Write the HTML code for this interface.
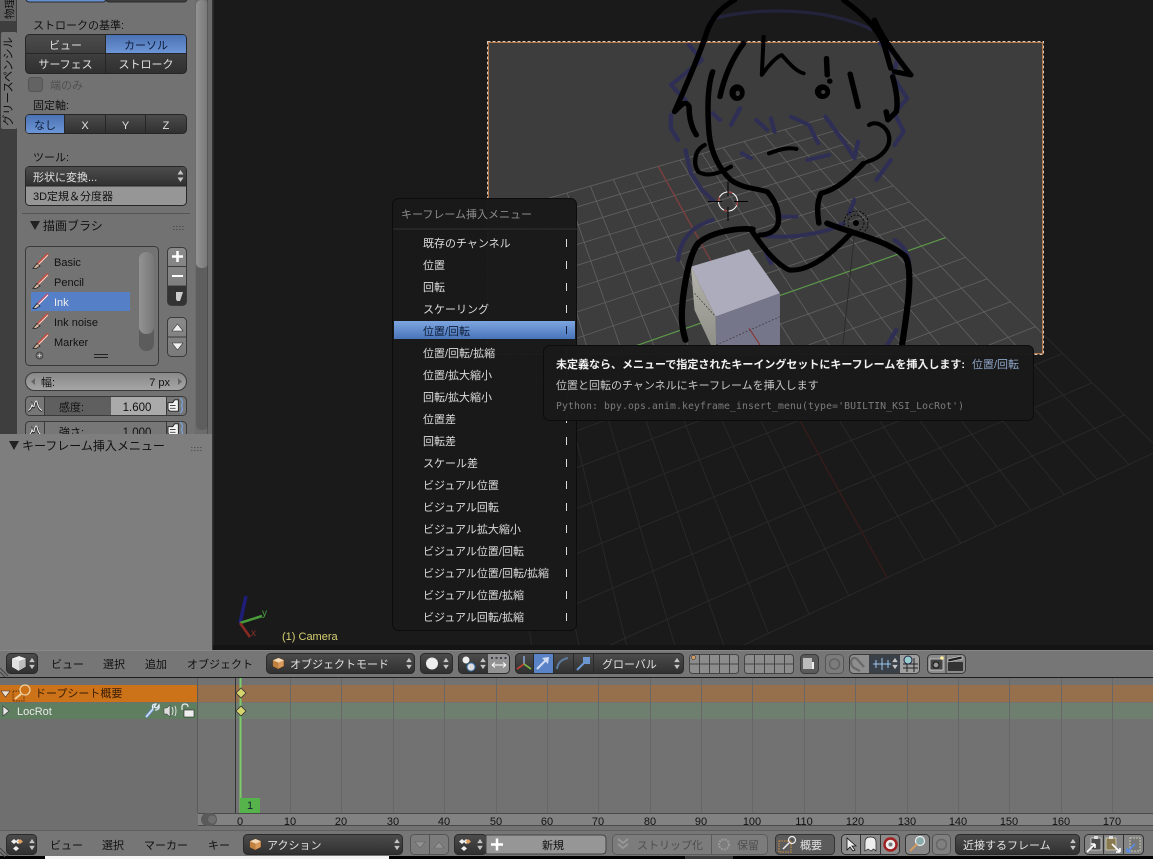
<!DOCTYPE html>
<html><head><meta charset="utf-8"><title>Blender</title>
<style>
html,body{margin:0;padding:0;background:#000;width:1153px;height:859px;overflow:hidden}
svg{display:block;filter:blur(.35px)}
text{font-family:"Liberation Sans","Noto Sans CJK JP",sans-serif;font-size:11px;fill:#111}
.l{fill:#e2e2e2}.m{fill:#dcdcdc}.c{text-anchor:middle}
.b{fill:none;stroke:#000;stroke-width:15;stroke-linecap:round;stroke-linejoin:round}
.u{fill:none;stroke:#2f2f56;stroke-width:12;stroke-linecap:round;stroke-linejoin:round}
</style></head><body>
<svg xmlns="http://www.w3.org/2000/svg" width="1153" height="859" viewBox="0 0 1153 859">
<defs>
<linearGradient id="dk2" x1="0" y1="0" x2="0" y2="1"><stop offset="0" stop-color="#4c4c4c"/><stop offset="1" stop-color="#303030"/></linearGradient>
<linearGradient id="bl" x1="0" y1="0" x2="0" y2="1"><stop offset="0" stop-color="#4b72b2"/><stop offset="1" stop-color="#6d96d8"/></linearGradient>
<linearGradient id="mh" x1="0" y1="0" x2="0" y2="1"><stop offset="0" stop-color="#7da5e0"/><stop offset="1" stop-color="#4874b8"/></linearGradient>
<linearGradient id="gy" x1="0" y1="0" x2="0" y2="1"><stop offset="0" stop-color="#8a8a8a"/><stop offset="1" stop-color="#7a7a7a"/></linearGradient>
<linearGradient id="sl" x1="0" y1="0" x2="0" y2="1"><stop offset="0" stop-color="#888"/><stop offset="1" stop-color="#a6a6a6"/></linearGradient>
<linearGradient id="sc" x1="0" y1="0" x2="1" y2="0"><stop offset="0" stop-color="#939393"/><stop offset="1" stop-color="#777"/></linearGradient>
<linearGradient id="lf" x1="0" y1="0" x2="0" y2="1"><stop offset="0" stop-color="#b4b4ac"/><stop offset="1" stop-color="#8a8a84"/></linearGradient>
<symbol id="brush" viewBox="0 0 16 16" overflow="visible"><path d="M0 15.500 L4 10.500 L7 13 L3 15.500 Z" fill="#d8b8a0" stroke="#222" stroke-width=".8"/><path d="M5 11 L15 1" stroke="#c05040" stroke-width="3"/><path d="M5.500 11.500 L15 2" stroke="#f0e0d8" stroke-width=".9"/></symbol>
<symbol id="brushb" viewBox="0 0 16 16" overflow="visible"><path d="M0 15.500 L4 10.500 L7 13 L3 15.500 Z" fill="#d8c8d0" stroke="#122" stroke-width=".8"/><path d="M5 11 L15 1" stroke="#b05878" stroke-width="3"/><path d="M5.500 11.500 L15 2" stroke="#fff" stroke-width=".9"/></symbol>
<symbol id="cube" viewBox="0 0 14 14"><path d="M7 1 L13 3.500 L13 10 L7 13 L1 10 L1 3.500Z" fill="#d99a5c" stroke="#4a3320" stroke-width=".7"/><path d="M7 1 L13 3.500 L7 6 L1 3.500Z" fill="#f4d8b4"/><path d="M1 3.500 L7 6 L7 13 L1 10Z" fill="#c08040"/></symbol>
<symbol id="keys" viewBox="0 0 16 14"><path d="M4 1 L7 3.500 L4 6 L1 3.500Z M8 1 L11 3.500 L8 6 L5.500 3.500Z M6 8 L9 10.500 L6 13 L3 10.500Z" fill="#eee"/><path d="M10 1 L13 3.500 L10 6 L7.500 3.500Z" fill="#e0a060"/></symbol>
<symbol id="ud" viewBox="0 0 8 14"><path d="M4 1 L7 5.500 L1 5.500Z M4 13 L7 8.500 L1 8.500Z" fill="#c4c4c4"/></symbol>
<symbol id="hand" viewBox="0 0 20 18"><path d="M1 6 H6 L8 3 H12 V15 H5 Q1 15 1 12Z" fill="#f2f2f2" stroke="#222" stroke-width="1"/><path d="M3 9 H9 M3 12 H9" stroke="#444" stroke-width="1"/><path d="M14 1 Q18 5 15 9 Q18 13 14 17" fill="none" stroke="#7ba4e0" stroke-width="1.300"/></symbol>
<symbol id="peak" viewBox="0 0 16 14"><path d="M1 13 Q4 12 5 7 Q6 10 7 9 Q8 2 10 4 Q11 11 15 13" fill="none" stroke="#222" stroke-width="2.200"/><path d="M1 12.500 Q4 11.500 5 6.500 Q6 9.500 7 8.500 Q8 1.500 10 3.500 Q11 10.500 15 12.500" fill="none" stroke="#eee" stroke-width="1.100"/></symbol>
</defs>

<rect width="1153" height="859" fill="#000"/>

<!-- VIEWPORT -->
<rect x="213" y="0" width="940" height="650" fill="#3d3d3d"/>
<g id="grid" stroke="#626262" stroke-width=".8" fill="none"></g>
<!-- cube -->
<g transform="translate(480 0) scale(.3636 .3333)">
<path d="M580 800 L740 748 L825 880 L648 950Z" fill="#acacbc"/>
<path d="M648 950 L825 880 L825 1070 L650 1070Z" fill="#76768a"/>
<path d="M580 800 L648 950 L650 1070 L590 930Z" fill="url(#lf)"/>
<path d="M590 880 L648 950 M650 1035 L825 950" stroke="#333" stroke-width="2" stroke-dasharray="5 5" fill="none"/>
<path d="M740 985 L770 1035" stroke="#8a3030" stroke-width="3"/>
<path d="M1030 700 L998 1035" stroke="#2b2b2b" stroke-width="2.500" fill="none"/>
</g>
<!-- passepartout -->
<path d="M213 0 H1153 V650 H213Z M488 42 V354 H1043 V42Z" fill="#000" fill-opacity=".56" fill-rule="evenodd"/>
<rect x="488.500" y="42.500" width="554" height="311" fill="none" stroke="#b87848" stroke-width="1"/>
<rect x="487.500" y="41.500" width="556" height="313" fill="none" stroke="#dcc8b8" stroke-width="1" stroke-dasharray="3 2"/>
<!-- drawing -->
<g transform="translate(480 0) scale(.3636 .3333)">
<path d="M630 60 C750 20 950 20 1080 90" fill="none" stroke="#23233c" stroke-width="10"/>
<g class="u">
<path d="M575 135 L610 180 L525 255 L565 300"/><path d="M525 345 L525 385 L545 420"/><path d="M640 340 L660 360"/><path d="M690 375 L715 325"/><path d="M760 360 L790 390"/><path d="M800 355 L810 395"/><path d="M855 350 L905 375 L930 430"/><path d="M950 350 L1010 440 L1030 475"/><path d="M1100 130 L1150 170 L1135 230 L1175 295 L1140 340 L1165 395 L1140 435"/><path d="M565 450 L580 520 L610 570 L640 600"/><path d="M720 460 L745 475"/><path d="M900 480 L960 465"/><path d="M1040 425 L1030 470"/><path d="M1130 480 L1090 540"/><path d="M1030 600 L1015 640"/><path d="M545 780 C550 720 580 680 640 660"/><path d="M770 705 C850 720 950 700 1000 670"/><path d="M830 650 L870 650"/><path d="M1140 720 C1170 740 1180 770 1180 790"/><path d="M1120 1035 L1145 990"/><path d="M800 790 L780 740"/>
</g>
<g class="b">
<path d="M700 0 C650 30 630 70 620 110 C600 170 570 250 535 335 C550 320 565 295 575 320 C575 350 580 380 595 405"/>
<path d="M1000 0 C1050 40 1090 80 1110 130 L1130 205"/>
<path d="M1085 60 C1100 100 1130 150 1185 225 L1140 215"/>
<path d="M1135 230 C1145 270 1150 310 1145 335 L1122 360 L1117 335"/>
<path d="M725 130 C690 180 670 240 660 290"/>
<path d="M640 215 C625 260 625 330 630 400 C635 460 660 510 690 540 C720 565 760 565 790 575 C810 600 825 630 820 670 C815 695 790 705 770 705"/>
<path d="M618 435 C590 450 585 490 600 515 C620 530 650 525 690 500" style="stroke-width:12"/>
<path d="M780 110 L775 225 C790 200 815 170 830 165 C850 190 870 215 890 220" style="stroke-width:11"/>
<path d="M953 175 L955 225 M962 243 L962 244"/>
<path d="M1018 222 L1040 320"/>
<path d="M795 460 C820 450 845 440 870 447" style="stroke-width:12"/>
<path d="M1070 375 C1090 360 1120 380 1125 410 C1130 445 1100 475 1065 485" style="stroke-width:12"/>
<path d="M1055 490 C1020 530 980 570 938 580 C925 610 928 640 932 670"/>
<path d="M750 688 C700 682 630 700 600 730 C570 770 555 900 555 950 C555 980 560 1000 565 1020" style="stroke-width:17"/>
<path d="M745 688 C770 730 810 790 850 810 C900 815 960 770 1020 700"/>
<path d="M955 670 C1020 700 1120 720 1170 770 C1190 810 1180 900 1160 1040" style="stroke-width:17"/>
</g>
<ellipse cx="707" cy="278" rx="21" ry="25" fill="#000"/><ellipse cx="709" cy="280" rx="6" ry="8" fill="#3d3d3d"/>
<ellipse cx="942" cy="275" rx="21" ry="22" fill="#000"/><ellipse cx="944" cy="276" rx="6" ry="6" fill="#3d3d3d"/>
</g>
<!-- 3D cursor -->
<g fill="none"><circle cx="728" cy="201.500" r="9.500" stroke="#fff" stroke-width="1"/><circle cx="728" cy="201.500" r="9.500" stroke="#b03030" stroke-width="1.100" stroke-dasharray="4 11"/>
<path d="M708 201.500 H722 M734 201.500 H748 M728 182 V196 M728 207 V221" stroke="#000" stroke-width="1"/></g>
<!-- lamp -->
<g fill="none" stroke="#000" stroke-width=".8" stroke-dasharray="2 1.500"><circle cx="856" cy="223" r="8"/><circle cx="856" cy="223" r="12"/></g><circle cx="856" cy="223" r="3" fill="#000"/>
<!-- mini axis -->
<g fill="none" stroke-width="2"><path d="M240 623 L246 596" stroke="#1e1e78" stroke-width="3.500"/><path d="M240 623 L262 616" stroke="#4a9c3a" stroke-width="2.500"/><path d="M240 623 L250 637" stroke="#8a2a22" stroke-width="2.500"/></g>
<text x="262" y="616" style="font-size:10px;fill:#4aa040">y</text><text x="251" y="636" style="font-size:10px;fill:#8a3028">x</text>
<text x="282" y="640" style="fill:#d6cf72">(1) Camera</text>

<!-- MENU -->
<rect x="392.500" y="198.500" width="184" height="432" rx="6" fill="#191919" fill-opacity=".98" stroke="#0c0c0c"/>
<text x="401" y="218" style="fill:#8c8c8c">キーフレーム挿入メニュー</text>
<rect x="393" y="228.500" width="184" height="1" fill="#333"/>
<rect x="394" y="321" width="181" height="18" fill="url(#mh)"/>
<text class="m" x="423" y="247">既存のチャンネル</text>
<text class="m" x="423" y="269">位置</text>
<text class="m" x="423" y="291">回転</text>
<text class="m" x="423" y="313">スケーリング</text>
<text x="423" y="335" style="fill:#0e1c38">位置/回転</text>
<text class="m" x="423" y="357">位置/回転/拡縮</text>
<text class="m" x="423" y="379">位置/拡大縮小</text>
<text class="m" x="423" y="401">回転/拡大縮小</text>
<text class="m" x="423" y="423">位置差</text>
<text class="m" x="423" y="445">回転差</text>
<text class="m" x="423" y="467">スケール差</text>
<text class="m" x="423" y="489">ビジュアル位置</text>
<text class="m" x="423" y="511">ビジュアル回転</text>
<text class="m" x="423" y="533">ビジュアル拡大縮小</text>
<text class="m" x="423" y="555">ビジュアル位置/回転</text>
<text class="m" x="423" y="577">ビジュアル位置/回転/拡縮</text>
<text class="m" x="423" y="599">ビジュアル位置/拡縮</text>
<text class="m" x="423" y="621">ビジュアル回転/拡縮</text>
<path d="M566.500 239 v8 M566.500 261 v8 M566.500 283 v8 M566.500 305 v8 M566.500 349 v8 M566.500 371 v8 M566.500 393 v8 M566.500 415 v8 M566.500 437 v8 M566.500 459 v8 M566.500 481 v8 M566.500 503 v8 M566.500 525 v8 M566.500 547 v8 M566.500 569 v8 M566.500 591 v8 M566.500 613 v8" stroke="#ddd" stroke-width="1"/>
<path d="M566.500 326 v8" stroke="#0e1c38" stroke-width="1"/>

<!-- TOOLTIP -->
<rect x="543.500" y="345.500" width="490" height="75" rx="6" fill="#1a1a1a" fill-opacity=".98" stroke="#0c0c0c"/>
<text x="556" y="368" style="fill:#f2f2f2;font-weight:bold">未定義なら、メニューで指定されたキーイングセットにキーフレームを挿入します:</text>
<text x="972" y="368" style="fill:#8ea6c8">位置/回転</text>
<text x="556" y="389" style="fill:#c8c8c8">位置と回転のチャンネルにキーフレームを挿入します</text>
<text x="556" y="409" textLength="408" style="font-family:'DejaVu Sans Mono','Liberation Mono',monospace;font-size:9.800px;fill:#7c7c7c">Python: bpy.ops.anim.keyframe_insert_menu(type='BUILTIN_KSI_LocRot')</text>

<!-- LEFT PANEL -->
<rect x="0" y="0" width="213" height="434" fill="#727272"/>
<rect x="0" y="0" width="17" height="434" fill="#3e3e3e"/>
<rect x="0" y="0" width="16" height="21" fill="#636363"/>
<rect x="1" y="32" width="16" height="97" rx="2" fill="#727272"/>
<text transform="translate(13 19) rotate(-90)" style="font-size:10.500px">物理</text>
<text transform="translate(12 126) rotate(-90)" style="font-size:11.300px">グリースペンシル</text>
<rect x="195" y="0" width="13" height="434" fill="#6c6c6c"/>
<rect x="196" y="0" width="12" height="430" rx="5" fill="#5e5e5e"/>
<rect x="196" y="0" width="12" height="268" rx="5" fill="url(#sc)"/>
<rect x="207.500" y="0" width="1" height="434" fill="#3a3a3a"/>
<rect x="208" y="0" width="4" height="434" fill="#6b6b6b"/>
<rect x="212" y="0" width="1.500" height="650" fill="#333"/>
<!-- top fragment -->
<rect x="26" y="-6" width="80" height="8" rx="3" fill="url(#bl)" stroke="#2a2a2a"/>
<rect x="106" y="-6" width="81" height="8" rx="3" fill="#3c3c3c" stroke="#2a2a2a"/>

<text x="33" y="29">ストロークの基準:</text>
<rect x="25.500" y="34.500" width="161" height="39" rx="4" fill="url(#dk2)" stroke="#262626"/>
<path d="M106 35 H183 Q186 35 186 38 V53 H106Z" fill="url(#bl)"/>
<path d="M26 53.500 H186 M105.500 35 V73" stroke="#262626" stroke-width="1" fill="none"/>
<text class="l c" x="65.500" y="49">ビュー</text><text class="c" x="146" y="49" style="fill:#0e1c38">カーソル</text>
<text class="l c" x="65.500" y="68">サーフェス</text><text class="l c" x="146" y="68">ストローク</text>
<rect x="28.500" y="77.500" width="14" height="14" rx="3" fill="#636363" stroke="#555"/>
<text x="50" y="89" style="fill:#505050">端のみ</text>
<text x="33" y="109">固定軸:</text>
<rect x="25.500" y="114.500" width="161" height="19" rx="4" fill="url(#dk2)" stroke="#262626"/>
<path d="M64 115 V133 H29 Q26 133 26 130 V118 Q26 115 29 115Z" fill="url(#bl)"/>
<path d="M64.500 115 V133 M105.500 115 V133 M145.500 115 V133" stroke="#262626"/>
<text class="c" x="45" y="129" style="fill:#0e1c38">なし</text><text class="l c" x="85" y="129">X</text><text class="l c" x="125.500" y="129">Y</text><text class="l c" x="166" y="129">Z</text>
<text x="33" y="161">ツール:</text>
<rect x="25.500" y="166.500" width="161" height="39" rx="4" fill="#969696" stroke="#262626"/>
<path d="M26 186 V170 Q26 167 29 167 H183 Q186 167 186 170 V186Z" fill="url(#dk2)"/>
<path d="M26 186 H186" stroke="#262626"/>
<text class="l" x="33" y="181">形状に変換...</text>
<use href="#ud" x="176" y="169" width="9" height="14"/>
<text x="33" y="200">3D定規＆分度器</text>
<rect x="22" y="213" width="168" height="1" fill="#555"/>
<path d="M30 221 H40 L35 230Z" fill="#222"/>
<text x="43" y="230" style="font-size:12px">描画ブラシ</text>
<path d="M173 226.500 h12 M173 229.500 h12" stroke="#4d4d4d" stroke-dasharray="1.500 1.500"/>

<rect x="25.500" y="246.500" width="133" height="119" rx="4" fill="#737373" stroke="#3a3a3a"/>
<rect x="31" y="292" width="99" height="19" fill="#5580c8"/>
<use href="#brush" x="33" y="253" width="16" height="16"/><text x="54" y="266">Basic</text>
<use href="#brush" x="33" y="273" width="16" height="16"/><text x="54" y="286">Pencil</text>
<use href="#brushb" x="33" y="293" width="16" height="16"/><text x="54" y="306" style="fill:#eee">Ink</text>
<use href="#brush" x="33" y="313" width="16" height="16"/><text x="54" y="326">Ink noise</text>
<use href="#brush" x="33" y="333" width="16" height="16"/><text x="54" y="346">Marker</text>
<rect x="139" y="252" width="15" height="99" rx="7" fill="#5c5c5c"/>
<rect x="139" y="252" width="15" height="82" rx="7" fill="url(#sc)"/>
<circle cx="39.500" cy="355.500" r="3.500" fill="#6a6a6a" stroke="#3a3a3a" stroke-width=".7"/><path d="M37.500 355.500 h4 M39.500 353.500 v4" stroke="#ddd" stroke-width=".7"/>
<path d="M94 354.500 h14 M94 357.500 h14" stroke="#222"/>
<rect x="167.500" y="247.500" width="19" height="58" rx="4" fill="url(#gy)" stroke="#3a3a3a"/>
<path d="M168 286 V302 Q168 305 171 305 H183 Q186 305 186 302 V286Z" fill="#333"/>
<path d="M168 266.500 H186 M168 286 H186" stroke="#3a3a3a"/>
<path d="M172 256.500 h11 M177.500 251 v11" stroke="#fff" stroke-width="2.500"/>
<path d="M172 276 h11" stroke="#fff" stroke-width="2"/>
<path d="M172 292 H183 L180 301 H177Z" fill="#ccc"/><path d="M176 292 H172 L176 300Z" fill="#333"/>
<rect x="167.500" y="317.500" width="19" height="39" rx="4" fill="url(#gy)" stroke="#3a3a3a"/>
<path d="M168 337 H186" stroke="#3a3a3a"/>
<path d="M172 331 L177.500 324 L183 331Z" fill="#f0f0f0" stroke="#333" stroke-width=".6"/>
<path d="M172 343 L177.500 350 L183 343Z" fill="#f0f0f0" stroke="#333" stroke-width=".6"/>

<rect x="25.500" y="372.500" width="161" height="18" rx="9" fill="url(#sl)" stroke="#3a3a3a"/>
<path d="M35 378 L31 381.500 L35 385Z M178 378 L182 381.500 L178 385Z" fill="#666"/>
<text x="41" y="386">幅:</text><text x="170" y="386" style="text-anchor:end">7 px</text>

<rect x="25.500" y="396.500" width="161" height="19" rx="4" fill="#777" stroke="#3a3a3a"/>
<rect x="45" y="397" width="66" height="18" fill="#5f5f5f"/>
<rect x="111" y="397" width="55" height="18" fill="#aaa"/>
<path d="M44.500 397 V415 M166.500 397 V415" stroke="#3a3a3a"/>
<use href="#peak" x="27" y="398" width="16" height="14"/>
<text x="59" y="411">感度:</text><text x="137" y="411" class="c" style="font-size:11.500px">1.600</text>
<use href="#hand" x="167" y="397" width="19" height="17"/>
<rect x="25.500" y="421.500" width="161" height="19" rx="4" fill="#777" stroke="#3a3a3a"/>
<path d="M44.500 422 V434 M166.500 422 V434" stroke="#3a3a3a"/>
<use href="#peak" x="27" y="423" width="16" height="14"/>
<text x="59" y="436">強さ:</text><text x="137" y="436" class="c" style="font-size:11.500px">1.000</text>
<use href="#hand" x="167" y="421" width="19" height="17"/>

<!-- lower panel -->
<rect x="0" y="434" width="212" height="216" fill="#7e7e7e"/>
<path d="M9 441 H19 L14 450Z" fill="#222"/>
<text x="22" y="450" style="font-size:12px">キーフレーム挿入メニュー</text>
<path d="M191 447.500 h11 M191 450.500 h11" stroke="#555" stroke-dasharray="1.500 1.500"/>

<!-- TOP HEADER -->
<rect x="213" y="645" width="940" height="5" fill="#141414"/>
<rect x="0" y="650" width="1153" height="27" fill="#767676"/>
<rect x="0" y="650" width="1153" height="1" fill="#888"/>
<rect x="0" y="677" width="1153" height="1" fill="#1c1c1c"/>
<path d="M0 668 L8 676 M0 672 L5 677" stroke="#444"/>
<rect x="6.500" y="653.500" width="31" height="20" rx="4" fill="url(#dk2)" stroke="#2a2a2a"/>
<path d="M19 656 L26 658.500 V667 L19 671 L12 667 V658.500Z" fill="#bcbcbc" stroke="#222" stroke-width=".6"/>
<path d="M19 656 L26 658.500 L19 661 L12 658.500Z" fill="#f0f0f0"/>
<path d="M12 658.500 L19 661 V671 L12 667Z" fill="#e0e0e0"/>
<use href="#ud" x="28" y="657" width="8" height="13"/>
<text x="51" y="668">ビュー</text><text x="103" y="668">選択</text><text x="145" y="668">追加</text><text x="187" y="668">オブジェクト</text>
<rect x="266.500" y="653.500" width="148" height="20" rx="4" fill="url(#dk2)" stroke="#2a2a2a"/>
<use href="#cube" x="272" y="657" width="13" height="13"/>
<text class="l" x="290" y="668">オブジェクトモード</text>
<use href="#ud" x="405" y="657" width="8" height="13"/>
<rect x="420.500" y="653.500" width="32" height="20" rx="4" fill="url(#dk2)" stroke="#2a2a2a"/>
<circle cx="432" cy="663.500" r="6" fill="#eee"/><use href="#ud" x="442" y="657" width="8" height="13"/>
<rect x="458.500" y="653.500" width="51" height="20" rx="4" fill="url(#dk2)" stroke="#2a2a2a"/>
<path d="M488 654 H505 Q509 654 509 658 V669 Q509 673 505 673 H488Z" fill="#929292"/>
<circle cx="466" cy="660" r="3.500" fill="#eee"/><circle cx="471" cy="667" r="4" fill="#ddd" stroke="#3c78b4"/>
<use href="#ud" x="479" y="657" width="8" height="13"/>
<path d="M492 665 h14 M492 665 l3 -2.500 M492 665 l3 2.500 M506 665 l-3 -2.500 M506 665 l-3 2.500" stroke="#fff" fill="none"/>
<path d="M491 658 h2 M495.500 658 h2 M500 658 h2 M504.500 658 h2" stroke="#223" stroke-width="1.500"/>
<rect x="515.500" y="653.500" width="168" height="20" rx="4" fill="url(#dk2)" stroke="#2a2a2a"/>
<rect x="533" y="654" width="20" height="19" fill="#5a82c6"/>
<path d="M533.500 654 V673 M553.500 654 V673 M573.500 654 V673 M593.500 654 V673" stroke="#2a2a2a"/>
<path d="M524 664 V656" stroke="#8aa6d8" stroke-width="1.500"/><path d="M524 664 L517 669" stroke="#d04030" stroke-width="1.500"/><path d="M524 664 L531 669" stroke="#80c040" stroke-width="1.500"/>
<path d="M537 669 L546 660" stroke="#cfdcf4" stroke-width="2"/><path d="M549 657 L542 658 L548 664Z" fill="#cfdcf4"/>
<path d="M557 669 Q558 660 568 658" stroke="#5a7a9e" stroke-width="2" fill="none"/>
<path d="M577 670 L584 663" stroke="#6b96d0" stroke-width="2"/><rect x="583" y="657" width="7" height="7" fill="#6b96d0"/>
<text class="l" x="602" y="668">グローバル</text><use href="#ud" x="673" y="657" width="8" height="13"/>
<g fill="#8c8c8c" stroke="#444" stroke-width="1">
<rect x="689.500" y="654.500" width="49" height="19" rx="3"/><path d="M699.500 655 V673 M709.500 655 V673 M719.500 655 V673 M729.500 655 V673 M690 664 H738" fill="none"/>
<rect x="744.500" y="654.500" width="49" height="19" rx="3"/><path d="M754.500 655 V673 M764.500 655 V673 M774.500 655 V673 M784.500 655 V673 M745 664 H793" fill="none"/>
</g>
<circle cx="693.500" cy="657.500" r="2" fill="#e0a060" stroke="#222" stroke-width=".5"/>
<rect x="800.500" y="654.500" width="18" height="19" rx="4" fill="#5a5a5a" stroke="#3a3a3a"/><rect x="803" y="658" width="9" height="11" fill="#bbb"/><path d="M813 662 v7" stroke="#eee" stroke-width="2"/>
<rect x="825.500" y="654.500" width="18" height="19" rx="4" fill="#7c7c7c" stroke="#555"/><circle cx="834.500" cy="664" r="5" fill="none" stroke="#626262" stroke-width="1.500"/>
<rect x="849.500" y="654.500" width="70" height="19" rx="4" fill="#8e8e8e" stroke="#3a3a3a"/>
<rect x="869" y="655" width="31" height="18" fill="#3a4048"/>
<path d="M900 655 H915 Q919 655 919 659 V669 Q919 673 915 673 H900Z" fill="#a0a0a0"/>
<path d="M864 667 L857 659 Q853 656 851 661 Q851 666 854 668 L860 671" stroke="#686868" stroke-width="2.200" fill="none"/>
<path d="M873 664 h18 M876 660 v8 M882 658 v12 M888 660 v8" stroke="#9cc8ee" stroke-width="1"/>
<use href="#ud" x="891" y="657" width="8" height="13"/>
<path d="M903 668 h15 M903 664 h15 M907 658 v14 M914 658 v14" stroke="#222"/><circle cx="908" cy="660" r="4" fill="#9cc" stroke="#224"/>
<rect x="927.500" y="654.500" width="38" height="19" rx="4" fill="#8a8a8a" stroke="#3a3a3a"/><path d="M946 655 V673" stroke="#3a3a3a"/>
<rect x="930" y="659" width="13" height="11" fill="#444" stroke="#ddd" stroke-width=".7"/><circle cx="936" cy="665" r="3" fill="#999" stroke="#111"/><circle cx="942" cy="658" r="1.800" fill="#fff0a0"/>
<rect x="948" y="662" width="15" height="9" fill="#333"/><path d="M948 659 L962 656 V659 L948 662Z" fill="#222" stroke="#ddd" stroke-width=".6"/>

<!-- DOPE SHEET -->
<rect x="0" y="678" width="198" height="152" fill="#6f6f6f"/>
<rect x="198" y="678" width="955" height="152" fill="#727272"/>
<rect x="0" y="685" width="197" height="17" fill="#cc7218"/>
<rect x="198" y="685" width="955" height="17" fill="#966f4d"/>
<rect x="0" y="703" width="197" height="16" fill="#5f7e60"/>
<rect x="198" y="703" width="955" height="16" fill="#6e7e6f"/>
<rect x="197" y="678" width="1" height="135" fill="#5a5a5a"/>
<path stroke="#676767" d="M290.500 678 V813 M341.500 678 V813 M393.500 678 V813 M444.500 678 V813 M496.500 678 V813 M547.500 678 V813 M598.500 678 V813 M650.500 678 V813 M701.500 678 V813 M752.500 678 V813 M804.500 678 V813 M855.500 678 V813 M907.500 678 V813 M958.500 678 V813 M1009.500 678 V813 M1061.500 678 V813 M1112.500 678 V813"/>
<path d="M235.500 678 V813" stroke="#353535"/>
<rect x="239.500" y="678" width="2" height="135" fill="#7ccc6a"/>
<path d="M241 688 L246 693 L241 698 L236 693Z M241 706 L246 711 L241 716 L236 711Z" fill="#d6d46e" stroke="#333" stroke-width=".8"/>
<path d="M1 691 H10 L5.500 697Z" fill="#f0e0d0" stroke="#333" stroke-width=".6"/>
<path d="M3 706 V716 L9 711Z" fill="#e8e8e8" stroke="#333" stroke-width=".6"/>
<rect x="13" y="691" width="11" height="10" fill="none" stroke="#5a3010" stroke-dasharray="1.500 1"/>
<circle cx="25" cy="690" r="5" fill="#cc7218" stroke="#f0d0a0" stroke-width="1.300"/><path d="M21 694 L15 699" stroke="#f0d0a0" stroke-width="2"/>
<text x="35" y="697" style="fill:#3a1e08">ドープシート概要</text>
<text x="17" y="715" style="fill:#e8e8e8">LocRot</text>
<path d="M146 717 L153 709" stroke="#6d96d8" stroke-width="3"/>
<path d="M146 717 L153 709 M153 709 Q151 704 156 704 L154 707 L157 708 L159 705 Q160 710 155 710" stroke="#e4ecfa" stroke-width="1.300" fill="none"/>
<path d="M164 708 h3 l3 -3 v12 l-3 -3 h-3Z" fill="#ddd" stroke="#333" stroke-width=".5"/><path d="M172 707 q2 4 0 8 M175 706 q2 5 0 10" stroke="#ddd" fill="none"/>
<rect x="184" y="710" width="10" height="7" fill="#eee" stroke="#222" stroke-width=".6"/><path d="M182 710 V707 Q182 704 185 704 Q188 704 188 707" fill="none" stroke="#eee" stroke-width="1.200"/>
<rect x="240" y="798" width="20" height="15" fill="#56b24a"/>
<text class="c" x="250" y="809" style="fill:#123">1</text>

<!-- ruler -->
<rect x="198" y="813" width="955" height="13" fill="#828282"/>
<path d="M198 813.500 H1153 M198 825.500 H1153" stroke="#4a4a4a"/>
<rect x="201" y="813" width="16" height="13" rx="6.500" fill="#5a5a5a"/><circle cx="212" cy="819.500" r="4" fill="#6e6e6e"/>
<text class="c" x="240" y="825">0</text><text class="c" x="290" y="825">10</text><text class="c" x="341" y="825">20</text><text class="c" x="393" y="825">30</text><text class="c" x="444" y="825">40</text><text class="c" x="496" y="825">50</text><text class="c" x="547" y="825">60</text><text class="c" x="598" y="825">70</text><text class="c" x="650" y="825">80</text><text class="c" x="701" y="825">90</text><text class="c" x="752" y="825">100</text><text class="c" x="804" y="825">110</text><text class="c" x="855" y="825">120</text><text class="c" x="907" y="825">130</text><text class="c" x="958" y="825">140</text><text class="c" x="1009" y="825">150</text><text class="c" x="1061" y="825">160</text><text class="c" x="1112" y="825">170</text>

<!-- BOTTOM HEADER -->
<rect x="0" y="826" width="198" height="4" fill="#6f6f6f"/><rect x="198" y="826" width="955" height="4" fill="#727272"/>
<rect x="0" y="830" width="1153" height="26" fill="#767676"/>
<rect x="0" y="830" width="1153" height="1" fill="#606060"/>
<rect x="45" y="856" width="344" height="3" fill="#f4f4f4"/>
<rect x="685" y="856" width="48" height="3" fill="#3a3a3a"/>
<path d="M0 848 L8 856 M0 852 L5 857" stroke="#444"/>
<rect x="6.500" y="834.500" width="30" height="20" rx="4" fill="url(#dk2)" stroke="#2a2a2a"/>
<use href="#keys" x="10" y="838" width="16" height="14"/><use href="#ud" x="28" y="838" width="8" height="13"/>
<text x="50" y="849">ビュー</text><text x="102" y="849">選択</text><text x="144" y="849">マーカー</text><text x="208" y="849">キー</text>
<rect x="243.500" y="834.500" width="159" height="20" rx="4" fill="url(#dk2)" stroke="#2a2a2a"/>
<use href="#cube" x="249" y="838" width="13" height="13"/>
<text class="l" x="267" y="849">アクション</text><use href="#ud" x="393" y="838" width="8" height="13"/>
<rect x="410.500" y="834.500" width="38" height="20" rx="4" fill="#7c7c7c" stroke="#555"/><path d="M429.500 835 V854" stroke="#555"/>
<path d="M415 842 H425 L420 848Z M434 848 H444 L439 842Z" fill="#939393" stroke="#666" stroke-width=".6"/>
<rect x="454.500" y="834.500" width="32" height="20" rx="4" fill="url(#dk2)" stroke="#2a2a2a"/>
<use href="#keys" x="458" y="838" width="16" height="14"/><use href="#ud" x="476" y="838" width="8" height="13"/>
<path d="M486 835 H602 Q606 835 606 839 V850 Q606 854 602 854 H486Z" fill="#969696" stroke="#444"/>
<path d="M491 844.500 h12 M497 838.500 v12" stroke="#fff" stroke-width="2.500"/>
<text class="c" x="553" y="849">新規</text>
<rect x="612.500" y="834.500" width="155" height="20" rx="4" fill="#7c7c7c" stroke="#5c5c5c"/><path d="M711.500 835 V854" stroke="#5c5c5c"/>
<path d="M618 839 l5 4 l5 -4 M618 844 l5 4 l5 -4" stroke="#989898" stroke-width="2" fill="none"/>
<text x="637" y="849" style="fill:#4e4e4e">ストリップ化</text>
<circle cx="724" cy="844.500" r="5" fill="none" stroke="#999" stroke-width="2" stroke-dasharray="2 1"/>
<text x="737" y="849" style="fill:#4e4e4e">保留</text>
<rect x="775.500" y="834.500" width="59" height="20" rx="4" fill="#5b5b5b" stroke="#333"/>
<rect x="779" y="841" width="12" height="11" fill="none" stroke="#d09040" stroke-dasharray="1.500 1"/>
<circle cx="792" cy="840" r="3.500" fill="none" stroke="#eee" stroke-width="1.200"/><path d="M789 843 L783 849" stroke="#eee" stroke-width="1.500"/>
<text class="l c" x="811" y="849">概要</text>
<rect x="841.500" y="834.500" width="58" height="20" rx="4" fill="#8c8c8c" stroke="#333"/><path d="M860.500 835 V854 M880.500 835 V854" stroke="#333"/>
<path d="M847 838 V850 L850 847 L853 851 L855 850 L852 846 L856 846Z" fill="#eee" stroke="#111" stroke-width=".8"/>
<path d="M865 851 V842 Q865 837 870.500 837 Q876 837 876 842 V851 L873.500 849 L871 851 L868 849Z" fill="#eee" stroke="#222" stroke-width=".7"/>
<circle cx="890.500" cy="844.500" r="6" fill="#eee" stroke="#a02020" stroke-width="2.400"/><circle cx="890.500" cy="844.500" r="2" fill="#777"/>
<rect x="905.500" y="834.500" width="24" height="20" rx="4" fill="#888" stroke="#333"/>
<circle cx="920" cy="841" r="4.500" fill="#8aa" stroke="#eee" stroke-width="1.200"/><path d="M917 844 L910 851" stroke="#d09a60" stroke-width="2"/>
<rect x="932.500" y="834.500" width="18" height="20" rx="4" fill="#808080" stroke="#555"/><circle cx="941.500" cy="844.500" r="5" fill="none" stroke="#666" stroke-width="1.500"/>
<rect x="955.500" y="834.500" width="124" height="20" rx="4" fill="url(#dk2)" stroke="#2a2a2a"/>
<text class="l" x="963" y="849">近接するフレーム</text><use href="#ud" x="1069" y="838" width="8" height="13"/>
<rect x="1084.500" y="834.500" width="59" height="20" rx="4" fill="#848484" stroke="#333"/><path d="M1103.500 835 V854 M1123.500 835 V854" stroke="#333"/>
<rect x="1091" y="838" width="10" height="12" fill="#4a4a4a" stroke="#ddd" stroke-width=".7"/><rect x="1094" y="836" width="4" height="3" fill="#ddd"/><path d="M1087 852 L1095 844 M1095 844 h-4 M1095 844 v4" stroke="#fff" stroke-width="1.600" fill="none"/>
<rect x="1106" y="838" width="10" height="12" fill="#8a7a50" stroke="#ddc" stroke-width=".7"/><rect x="1109" y="836" width="4" height="3" fill="#ddd"/><path d="M1112 844 L1120 852 M1120 852 h-4 M1120 852 v-4" stroke="#fff" stroke-width="1.600" fill="none"/>
<rect x="1130" y="838" width="10" height="13" fill="#777" stroke="#ddb" stroke-width=".8" stroke-dasharray="2 1"/><path d="M1135 844 L1127 852 M1127 852 h4 M1127 852 v-4" stroke="#5a8ae0" stroke-width="1.600" fill="none"/>
</svg>
<script>
(function(){
var B=[825,118],L=[470,221],F=[545,738],R=[1160,450];
var sx=B[0]-L[0]+F[0]-R[0],sy=B[1]-L[1]+F[1]-R[1],
dx1=L[0]-F[0],dx2=R[0]-F[0],dy1=L[1]-F[1],dy2=R[1]-F[1],
den=dx1*dy2-dx2*dy1,g=(sx*dy2-dx2*sy)/den,h=(dx1*sy-sx*dy1)/den,
a=L[0]-B[0]+g*L[0],b=R[0]-B[0]+h*R[0],c=B[0],
d=L[1]-B[1]+g*L[1],e=R[1]-B[1]+h*R[1],f=B[1];
function P(u,v){var w=g*u+h*v+1;return ((a*u+b*v+c)/w).toFixed(1)+' '+((d*u+e*v+f)/w).toFixed(1)}
var s='',n=16,i;
for(i=0;i<=n;i++){var t=i/n;if(i==n/2)continue;s+='M'+P(t,0)+' L'+P(t,1)+' M'+P(0,t)+' L'+P(1,t)+' ';}
var G=document.getElementById('grid'),N='http://www.w3.org/2000/svg';
function add(dp,col,w){var p=document.createElementNS(N,'path');p.setAttribute('d',dp);if(col)p.setAttribute('stroke',col);if(w)p.setAttribute('stroke-width',w);G.appendChild(p)}
add(s);
add('M'+P(.5,0)+' L'+P(.5,1),'#7c3f3f',1.4);
add('M'+P(0,.5)+' L'+P(1,.5),'#5c9a48',1.2);
})();
</script>
</body></html>
